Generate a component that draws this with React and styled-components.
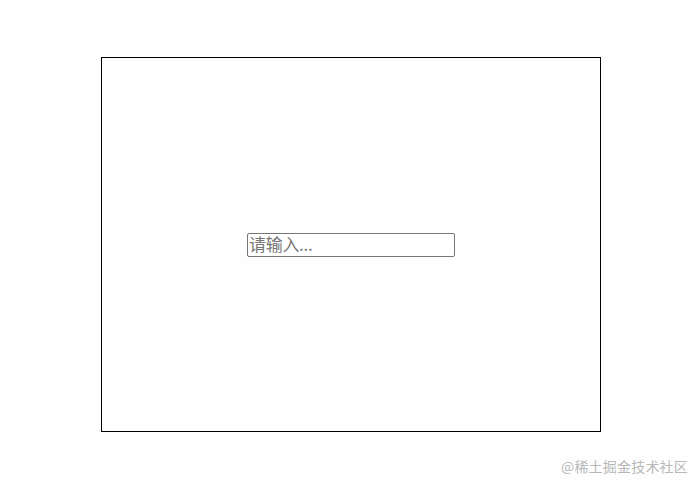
import styled, { createGlobalStyle } from 'styled-components'

const GlobalStyle = createGlobalStyle`
  html, body {
    margin: 0;
    padding: 0;
    background: #fefefe;
  }
  body {
    font-family: "Liberation Sans", "Noto Sans CJK SC", sans-serif;
  }
`;

const Page = styled.div`
  position: relative;
  width: 692px;
  height: 480px;
  padding: 57px 0 0 101px;
  box-sizing: border-box;
`;

const Box = styled.div`
  width: 500px;
  height: 375px;
  box-sizing: border-box;
  border: 1px solid #000;
  display: flex;
  align-items: center;
  justify-content: center;
`;

const Input = styled.input`
  width: 208px;
  height: 24px;
  box-sizing: border-box;
  margin: 0;
  padding: 0 1px 3px 1px;
  border: 1px solid #767676;
  border-radius: 2px;
  font-family: "Noto Sans CJK SC", sans-serif;
  font-size: 17px;
  color: #333;
  background: #fff;
  outline: none;

  &::placeholder {
    color: #757575;
    letter-spacing: -0.3px;
  }
`;

const Watermark = styled.div`
  position: absolute;
  right: 4px;
  bottom: 4px;
  font-family: "Noto Sans CJK SC", sans-serif;
  font-size: 14px;
  color: #b8b8b8;
  letter-spacing: 0.2px;
`;

const App = () => {
  return (
    <>
      <GlobalStyle />
      <Page>
        <Box>
          <Input placeholder="请输入..." />
        </Box>
        <Watermark>@稀土掘金技术社区</Watermark>
      </Page>
    </>
  )
}

export default App
